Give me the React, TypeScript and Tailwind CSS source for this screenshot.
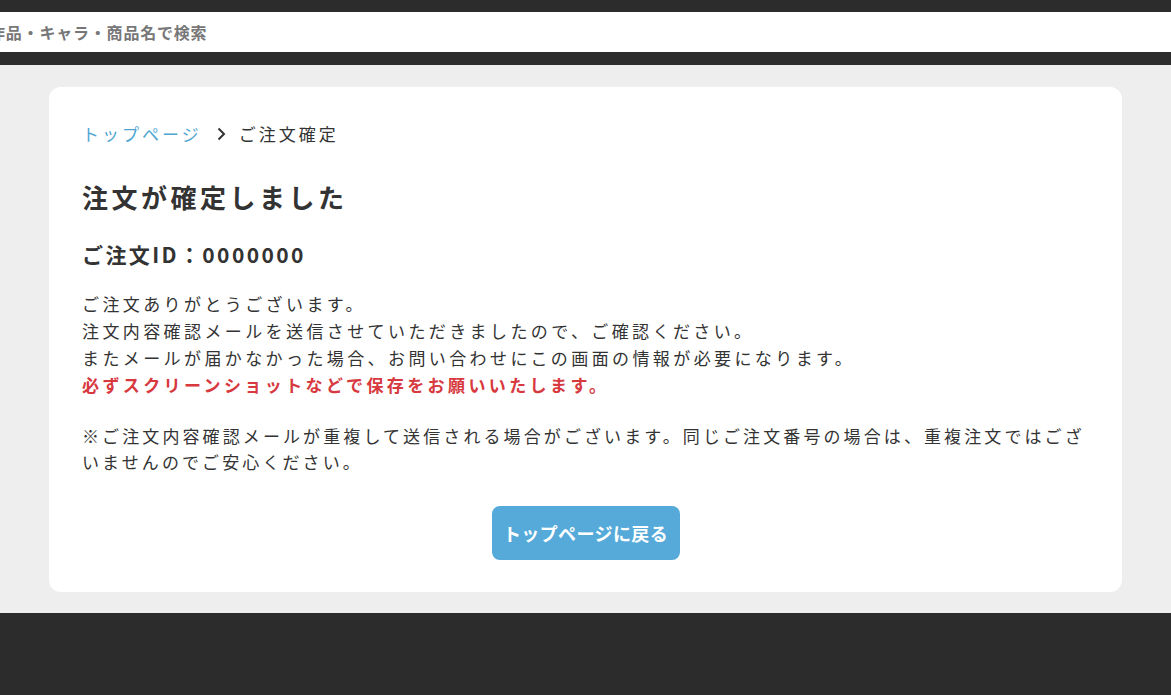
const font = { fontFamily: '"Noto Sans CJK JP", "Noto Sans", sans-serif' };

const Breadcrumb = () => (
  <nav className="flex items-center text-[17px] leading-[27px] tracking-[3px]">
    <a className="text-[#4fa6d3]" href="#">
      トップページ
    </a>
    <svg className="ml-[14px] mr-[13px] h-[14px] w-[10px]" viewBox="0 0 10 14" fill="none">
      <path d="M2.5 1.5 L8 7 L2.5 12.5" stroke="#333" strokeWidth="2" />
    </svg>
    <span className="text-[#333]">ご注文確定</span>
  </nav>
);

export default function App() {
  return (
    <div className="min-h-[695px] bg-[#2c2c2c]" style={font}>
      <header className="py-[12px] pb-[13px]">
        <div className="flex h-[40px] items-center overflow-hidden bg-white">
          <input
            type="text"
            placeholder="作品・キャラ・商品名で検索"
            className="-ml-[11px] w-full bg-transparent text-[16px] font-bold tracking-[0.8px] text-[#777] outline-none placeholder:text-[#777]"
          />
        </div>
      </header>
      <main className="bg-[#eeeeee] px-[49px] pb-[21px] pt-[22px]">
        <section className="rounded-[12px] bg-white px-[33px] pb-[32px] pt-[33px] text-[#333]">
          <Breadcrumb />
          <h1 className="mt-[32px] text-[26px] font-bold leading-[36px] tracking-[3.5px]">
            注文が確定しました
          </h1>
          <h2 className="mt-[24px] text-[21px] font-bold leading-[30px] tracking-[2.4px]">
            ご注文ID：0000000
          </h2>
          <p className="mt-[21px] text-[17px] leading-[27px] tracking-[3.4px]">
            ご注文ありがとうございます。
            <br />
            注文内容確認メールを送信させていただきましたので、ご確認ください。
            <br />
            またメールが届かなかった場合、お問い合わせにこの画面の情報が必要になります。
            <br />
            <strong className="font-bold text-[#d7393f]">
              必ずスクリーンショットなどで保存をお願いいたします。
            </strong>
          </p>
          <p className="mt-[25px] text-[17px] leading-[26px] tracking-[3.1px]">
            ※ご注文内容確認メールが重複して送信される場合がございます。同じご注文番号の場合は、重複注文ではございませんのでご安心ください。
          </p>
          <div className="mt-[31px] flex justify-center">
            <button className="h-[54px] w-[188px] rounded-[8px] bg-[#55aad9] text-[18px] font-bold tracking-[0.4px] text-white">
              トップページに戻る
            </button>
          </div>
        </section>
      </main>
    </div>
  );
}
